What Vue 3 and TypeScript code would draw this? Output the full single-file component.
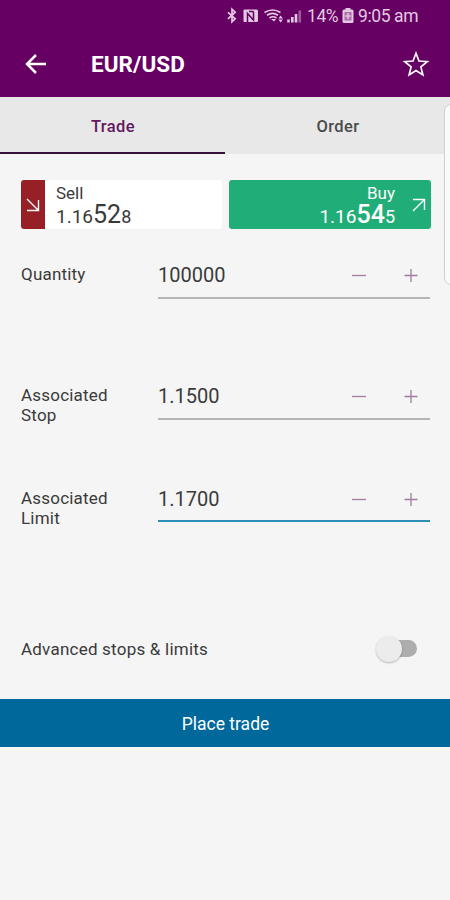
<script setup lang="ts">
import { ref } from 'vue'

interface Field {
  label: string
  value: string
  active: boolean
  name: string
}

const fields = ref<Field[]>([
  { label: 'Quantity', value: '100000', active: false, name: 'quantity' },
  { label: 'Associated Stop', value: '1.1500', active: false, name: 'stop' },
  { label: 'Associated Limit', value: '1.1700', active: true, name: 'limit' },
])
const tab = ref<'Trade' | 'Order'>('Trade')
const tabs = ['Trade', 'Order'] as const
</script>

<template>
  <main class="screen">
    <header class="header">
      <div class="status">
        <svg class="system" width="78" height="20" viewBox="0 0 78 20" fill="none">
          <path d="M3 6.300 10.200 12.800 7 15.800V3.200l3.200 3L3 12.800" class="bt" />
          <path d="M18.500 4.500q0-1 1-1h12q1.500 0 1.500 1.500v9.500q0 1.500-1.500 1.500h-12q-1 0-1-1z" fill="currentColor" />
          <path d="M22.500 16V7.500l6 6.500V6.500q0-1-1-1H24" class="nfc" />
          <path d="M39.500 6.500q8-5 16 0M42 9.300q5.500-4 11 0M44.500 12q3.500-2.500 7 0" stroke="currentColor" stroke-width="1.700" />
          <path d="M46 13h5l-2 2.500zM53.500 12.500l2-3 2.500 3zM53.500 13.500H58l-2.500 3z" fill="currentColor" />
          <path d="M63.500 13.500v3M67.300 11v5.500M71 8v8.500" stroke="currentColor" stroke-width="2.600" />
          <path d="M74.800 4.500v12" stroke="currentColor" stroke-width="2.600" opacity=".45" />
        </svg>
        <span class="percent">14%</span>
        <svg class="battery" width="12" height="15" viewBox="0 0 12 15">
          <path d="M3.500 0h5v1.500H10q1.500 0 1.500 1.500v10.500q0 1.500-1.500 1.500H2Q.5 15 .5 13.500V3Q.5 1.500 2 1.500h1.500z" fill="currentColor" />
          <path d="M2.500 4h7v8.500h-7z" fill="#660063" opacity=".45" />
          <path d="M6 5v6M3.500 8h5" stroke="currentColor" stroke-width="1.400" />
        </svg>
        <span class="clock">9:05 am</span>
      </div>
      <div class="bar">
        <button class="icon back" aria-label="Back">
          <svg width="24" height="24" viewBox="0 0 24 24"><path d="M22 12H3M12 3 3 12l9 9" fill="none" stroke="currentColor" stroke-width="2.500" /></svg>
        </button>
        <h1>EUR/USD</h1>
        <button class="icon star" aria-label="Favourite">
          <svg width="28" height="28" viewBox="0 0 28 28"><path d="m14 3.300 3 7.700 8.300.600-6.400 5.300 2 8.100-6.900-4.400L7.100 25l2-8.100-6.400-5.300L11 11z" fill="none" stroke="currentColor" stroke-width="1.700" /></svg>
        </button>
      </div>
    </header>
    <nav class="tabs">
      <button v-for="item in tabs" :key="item" :class="['tab', { selected: tab === item }]" @click="tab = item">{{ item }}</button>
    </nav>
    <section class="prices">
      <button class="price sell">
        <span class="direction"><svg width="16" height="16" viewBox="0 0 16 16"><path d="m2 2 11.500 11.500M13.500 3v10.500H2" /></svg></span>
        <span class="quote"><span class="side">Sell</span><span class="rate">1.16<b>52</b><small>8</small></span></span>
      </button>
      <button class="price buy">
        <span class="quote"><span class="side">Buy</span><span class="rate">1.16<b>54</b><small>5</small></span></span>
        <span class="direction"><svg width="16" height="16" viewBox="0 0 16 16"><path d="M2 14 13.500 2.500M2 2.500h11.500V13" /></svg></span>
      </button>
    </section>
    <section class="form">
      <div v-for="field in fields" :key="field.name" :class="['row', field.name, { active: field.active }]">
        <span class="label">{{ field.label }}</span>
        <div class="control">
          <span class="value">{{ field.value }}</span>
          <button class="step" aria-label="Decrease"><svg width="16" height="16" viewBox="0 0 16 16"><path d="M1 8.500h14" /></svg></button>
          <button class="step" aria-label="Increase"><svg width="16" height="16" viewBox="0 0 16 16"><path d="M1.500 8.500h13M8 2v13" /></svg></button>
        </div>
      </div>
    </section>
    <div class="advanced">
      <span>Advanced stops &amp; limits</span>
      <span class="switch" role="switch" aria-checked="false"><i></i></span>
    </div>
    <button class="submit">Place trade</button>
    <aside class="edge"></aside>
  </main>
</template>

<style>
body { background: #f5f5f5; }
</style>

<style scoped>
.screen { position: relative; width: 450px; height: 900px; overflow: hidden; background: #f5f5f5; color: #3a3a3a; font-family: Roboto, sans-serif; }
button { border: 0; padding: 0; margin: 0; font: inherit; color: inherit; background: none; }
svg { display: block; flex: none; }
.header { height: 97px; background: #660063; color: #fff; }
.status { height: 32px; display: flex; align-items: center; padding-left: 225px; color: #e3c8e2; font-size: 17.500px; white-space: nowrap; }
.system { margin-top: -1px; }
.system + .percent { margin-left: 4px; }
.system .bt { stroke: currentColor; stroke-width: 1.700; }
.nfc { stroke: #660063; stroke-width: 1.500; }
.percent { width: 35px; letter-spacing: -.4px; }
.battery { margin-top: -1px; }
.clock { margin-left: 4px; letter-spacing: -.4px; }
.bar { height: 63px; display: flex; align-items: center; padding: 0 20px 0 24px; }
h1 { margin: 1px auto 0 43px; font-size: 22.500px; line-height: 28px; font-weight: 700; letter-spacing: .05px; }
.tabs { display: grid; grid-template-columns: 1fr 1fr; height: 57px; background: #e8e8e8; }
.tab { font-size: 16.500px; font-weight: 500; letter-spacing: .4px; border-bottom: 2px solid transparent; color: #4a4a4a; padding: 3px 0 0 1px; }
.tab.selected { color: #63185f; border-color: #38113a; }
.prices { display: grid; grid-template-columns: 201px 202px; gap: 7px; padding: 26px 19px 0 21px; }
.price { height: 49px; display: flex; align-items: stretch; border-radius: 3px; overflow: hidden; text-align: left; }
.sell { background: #fff; }
.buy { background: #21ad78; color: #fff; }
.direction { display: flex; align-items: center; justify-content: center; width: 24px; color: #fff; }
.sell .direction { background: #972027; }
.buy .direction { width: 25px; }
.direction path { fill: none; stroke: currentColor; stroke-width: 1.400; }
.quote { display: flex; flex-direction: column; }
.sell .quote { padding-left: 11px; }
.buy .quote { margin-left: auto; text-align: right; padding-right: 11px; }
.side { font-size: 17px; line-height: 26px; height: 22px; }
.rate { font-size: 19px; line-height: 25px; white-space: nowrap; }
.rate b { font-size: 25px; font-weight: 400; }
.buy .rate b { font-weight: 500; }
.rate small { font-size: 18px; }
.form { padding: 19px 20px 0 21px; }
.row { display: grid; grid-template-columns: 137px 272px; align-items: start; }
.quantity { height: 121px; }
.stop { height: 103px; }
.limit { height: 152px; }
.label { width: 105px; padding-top: 16px; line-height: 20px; font-size: 17px; letter-spacing: .2px; }
.control { display: flex; align-items: center; height: 49px; border-bottom: 2px solid #b5b5b5; }
.active .control { height: 48px; border-color: #2d8fb7; }
.value { flex: 1; padding-top: 5px; font-size: 20px; }
.active .value { padding-top: 6px; }
.step { width: 52px; display: flex; justify-content: center; padding-top: 4px; color: #a27ca2; }
.active .step { padding-top: 5px; }
.step:last-child { margin-right: -7px; }
.step path { stroke: currentColor; stroke-width: 1.300; fill: none; }
.advanced { height: 49px; margin-bottom: 26px; padding: 0 33px 0 21px; display: flex; align-items: center; justify-content: space-between; font-size: 17px; letter-spacing: .22px; }
.switch { width: 41px; height: 27px; display: flex; align-items: center; }
.switch::after { content: ''; width: 26px; height: 17px; margin-left: -11px; border-radius: 9px; background: #adadad; }
.switch i { position: relative; z-index: 1; flex: none; width: 26px; height: 26px; border-radius: 50%; background: #ececec; box-shadow: 0 1px 2px #0004; }
.submit { display: block; width: 100%; height: 48px; padding: 1px 0 0 1px; background: #00689b; color: #fff; font-size: 17.500px; }
.edge { position: absolute; left: 444px; top: 104px; width: 20px; height: 181px; box-sizing: border-box; border: 1px solid #d0d0d0; border-radius: 7px; background: #fafafa; }
</style>
